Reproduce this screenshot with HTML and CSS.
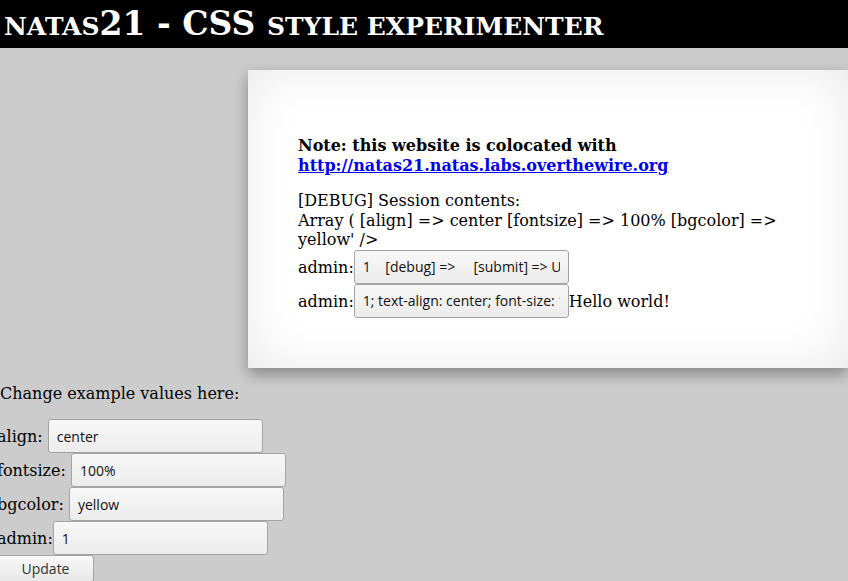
FILE: index.html
```
<!DOCTYPE html>
<html>
<head>
<meta charset="utf-8">
<link rel="stylesheet" href="styles.css">
</head>
<body>
<h1 class="title"><span class="sc">natas</span>21 - CSS <span class="sc">style experimenter</span></h1>
<div class="content">
<p class="note">Note: this website is colocated with <br><a href="#">http://natas21.natas.labs.overthewire.org</a></p>
<div class="debug">[DEBUG] Session contents:<br>Array ( [align] =&gt; center [fontsize] =&gt; 100% [bgcolor] =&gt; yellow' /&gt;<br>admin:<input class="field" value="1    [debug] =>     [submit] => Update )"><br>admin:<input class="field" value="1; text-align: center; font-size: 100%; background-color: yellow">Hello world!</div>
</div>
<p class="intro">Change example values here:</p>
<form class="form">
align: <input class="field" name="align" value="center"><br>fontsize: <input class="field" name="fontsize" value="100%"><br>bgcolor: <input class="field" name="bgcolor" value="yellow"><br>admin:<input class="field" name="admin" value="1"><br><button class="btn" type="button">Update</button>
</form>
</body>
</html>
```

FILE: styles.css
```
html {
  overflow: hidden;
}
body {
  margin: 0;
  background: #cccccc;
  font-family: "DejaVu Serif", serif;
  font-size: 16px;
  line-height: 19.5px;
  color: #000;
}
.title {
  margin: 0;
  height: 48px;
  line-height: 48px;
  padding-left: 4px;
  background: #000;
  color: #fff;
  font-size: 33px;
  font-weight: bold;
  white-space: nowrap;
}
.sc {
  font-size: 25px;
  text-transform: uppercase;
}
.content {
  margin: 22px 0 0 248px;
  padding: 50px;
  width: 500px;
  background: #fff;
  box-shadow: inset 0 0 50px rgba(0, 0, 0, 0.09), 0 6px 14px rgba(0, 0, 0, 0.35);
}
.note {
  margin: 16px 0;
  font-weight: bold;
}
.note a {
  color: #0000ee;
}
.field {
  box-sizing: border-box;
  width: 215px;
  height: 34px;
  margin: 0;
  padding: 0 8px;
  border: 1px solid #a3a3a3;
  border-radius: 3px;
  background: linear-gradient(#f7f7f7, #ececec);
  font-family: "Open Sans", sans-serif;
  font-size: 14px;
  color: #111;
}
.intro {
  margin: 16px 0;
}
.form {
  margin-left: -3px;
}
.btn {
  box-sizing: border-box;
  width: 97px;
  height: 27px;
  margin: 0;
  padding: 0;
  border: 1px solid #a3a3a3;
  border-radius: 3px;
  background: linear-gradient(#f7f7f7, #e8e8e8);
  font-family: "Open Sans", sans-serif;
  font-size: 14px;
  color: #333;
}
```
